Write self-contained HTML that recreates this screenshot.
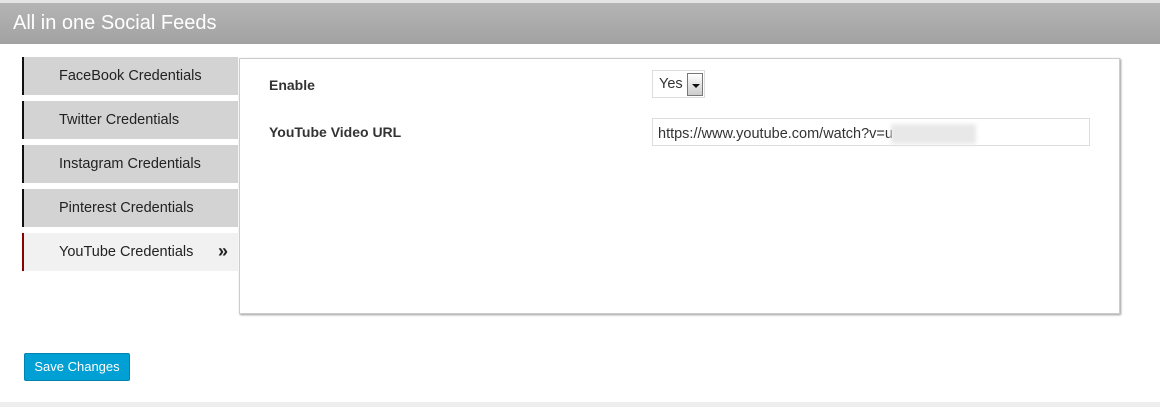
<!DOCTYPE html>
<html><head><style>
*{margin:0;padding:0;box-sizing:border-box}
body{width:1160px;height:407px;background:#fff;font-family:"Liberation Sans",sans-serif;position:relative;overflow:hidden}
.top{position:absolute;left:0;top:0;width:1160px;height:3px;background:#e4e4e4}
.hd{position:absolute;left:0;top:3px;width:1160px;height:41px;background:linear-gradient(#b4b4b4,#a2a2a2);color:#fff;font-size:20px;padding:9px 0 0 13px}
.tab{position:absolute;left:22px;width:216px;height:38px;background:#d3d3d3;border-left:2px solid #111;font-size:14.5px;color:#222;padding:11px 0 0 35px}
.tab.act{background:#f1f1f1;border-left-color:#8b0000}
.arr{position:absolute;left:194px;top:8px;font-weight:bold;font-size:18px}
.panel{position:absolute;left:239px;top:58px;width:881px;height:256px;background:#fff;border:1px solid #ccc;box-shadow:1px 1px 2px #999}
.lbl{position:absolute;left:29px;font-size:14px;font-weight:bold;color:#333}
.sel{position:absolute;left:412px;top:11px;width:53px;height:28px;border:1px solid #ddd;font-size:14.5px;padding:5px 0 0 6px;color:#333}
.sel i{position:absolute;left:34px;top:2px;width:16px;height:23px;border:1px solid #777;background:linear-gradient(#fff,#ccc)}
.sel i:after{content:"";position:absolute;left:4px;top:10px;border-left:4px solid transparent;border-right:4px solid transparent;border-top:4px solid #111}
.inp{position:absolute;left:412px;top:59px;width:438px;height:28px;border:1px solid #ddd;font-size:14.5px;padding:5px 0 0 5px;color:#333}
.blur{display:inline-block;width:85px;height:20px;background:#e8e8e8;vertical-align:middle;filter:blur(2px);margin-left:-2px}
.btn{position:absolute;left:24px;top:353px;width:106px;height:28px;background:#009fd4;border:1px solid #0083b0;border-radius:2px;color:#fff;font-size:13px;text-align:center;line-height:26px}
.bot{position:absolute;left:0;top:402px;width:1160px;height:5px;background:#eee}
</style></head><body>
<div class="top"></div>
<div class="hd">All in one Social Feeds</div>
<div class="tab" style="top:57px">FaceBook Credentials</div>
<div class="tab" style="top:101px">Twitter Credentials</div>
<div class="tab" style="top:145px">Instagram Credentials</div>
<div class="tab" style="top:189px">Pinterest Credentials</div>
<div class="tab act" style="top:233px">YouTube Credentials<span class="arr">»</span></div>
<div class="panel">
<div class="lbl" style="top:18px">Enable</div>
<div class="sel">Yes<i></i></div>
<div class="lbl" style="top:65px">YouTube Video URL</div>
<div class="inp">https://www.youtube.com/watch?v=u<span class="blur"></span></div>
</div>
<div class="btn">Save Changes</div>
<div class="bot"></div>
</body></html>
